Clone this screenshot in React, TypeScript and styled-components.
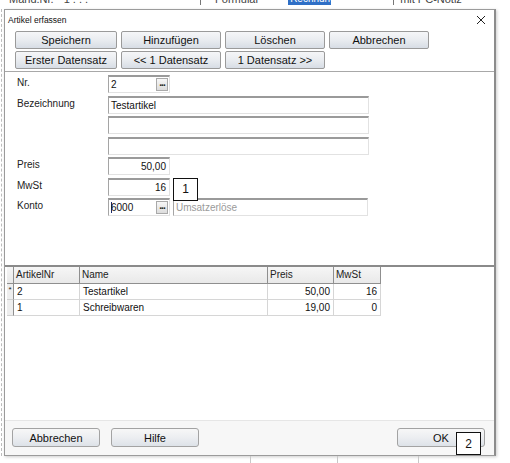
import styled, { createGlobalStyle } from "styled-components"

const GlobalStyle = createGlobalStyle`
  html, body {
    margin: 0;
    padding: 0;
    background: #ffffff;
    font-family: "Liberation Sans", Arial, sans-serif;
  }
  * { box-sizing: border-box; }
`

const Page = styled.div`
  width: 510px;
  height: 463px;
  overflow: hidden;
  position: relative;
  background: #ffffff;
`

const BackStrip = styled.div`
  height: 9px;
  display: flex;
  align-items: flex-end;
  overflow: hidden;
  padding-bottom: 4px;
  font-size: 11px;
  color: #444;
`

const BackText = styled.span<{ $x: number }>`
  margin-left: ${(p) => p.$x}px;
  line-height: 11px;
  white-space: nowrap;
`

const BackHighlight = styled.span<{ $x: number }>`
  margin-left: ${(p) => p.$x}px;
  width: 43px;
  height: 12px;
  background: #2f6fc6;
  color: #fff;
  line-height: 11px;
  font-size: 10px;
  padding-left: 2px;
`

const BackTick = styled.span<{ $x: number }>`
  margin-left: ${(p) => p.$x}px;
  width: 1px;
  height: 6px;
  background: #777;
`

const Body = styled.div`
  display: flex;
`

const Gutter = styled.div`
  width: 4px;
  border-left: 1px dashed #bdbdbd;
  margin-left: 1px;
`

const Dialog = styled.div`
  width: 492px;
  margin-left: -1px;
  height: 447px;
  display: flex;
  flex-direction: column;
  border: 1px solid #9b9b9b;
  border-right: 2px solid #8c8c8c;
  background: #ffffff;
  box-shadow: 1px 1px 3px rgba(0, 0, 0, 0.2);
`

const TitleBar = styled.div`
  height: 20px;
  display: flex;
  align-items: center;
  justify-content: space-between;
  padding: 0 8px 0 3px;
`

const Title = styled.span`
  font-size: 8.5px;
  color: #111;
`

const Toolbar = styled.div`
  display: grid;
  grid-template-columns: 102px 100px 100px 100px;
  grid-auto-rows: 18px;
  column-gap: 4px;
  row-gap: 2px;
  padding: 1px 0 2px 10px;
  border-bottom: 1px solid #a8a8a8;
`

const ToolButton = styled.button`
  margin: 0;
  padding: 0;
  height: 18px;
  border: 1px solid #9a9a9a;
  border-radius: 2px;
  background: linear-gradient(#f5f6f8 0%, #e9ecf0 50%, #d7dde5 100%);
  font-family: "Liberation Sans", Arial, sans-serif;
  font-size: 11px;
  color: #111;
  line-height: 16px;
`

const FormPanel = styled.div`
  height: 195px;
  padding: 3px 0 0 12px;
  border-bottom: 2px solid #8a8a8a;
`

const FormGrid = styled.div`
  display: grid;
  grid-template-columns: 91px auto;
  grid-auto-rows: 18px;
  row-gap: 2.5px;
  align-items: center;
`

const Label = styled.span`
  font-size: 10px;
  color: #222;
  margin-top: -3px;
`

const FieldCell = styled.div`
  display: flex;
  gap: 3px;
  position: relative;
  height: 18px;
`

const TextBox = styled.div<{ $w: number; $right?: boolean; $muted?: boolean }>`
  width: ${(p) => p.$w}px;
  height: 18px;
  display: flex;
  align-items: center;
  justify-content: ${(p) => (p.$right ? "flex-end" : "flex-start")};
  padding: 0 3px 0 2px;
  border-top: 2px solid #9a9a9a;
  border-left: 1px solid #a5a5a5;
  border-right: 1px solid #e2e2e2;
  border-bottom: 1px solid #e2e2e2;
  font-size: 10px;
  color: ${(p) => (p.$muted ? "#9a9a9a" : "#111")};
  background: #fff;
`

const DotsButton = styled.span`
  margin-left: auto;
  margin-right: -2px;
  width: 12px;
  height: 13px;
  border: 1px solid #a9a9a9;
  background: linear-gradient(#f7f7f7, #dcdcdc);
  font-size: 10px;
  font-weight: bold;
  line-height: 7px;
  letter-spacing: -1px;
  text-align: center;
  color: #222;
  overflow: hidden;
`

const Caret = styled.span`
  width: 1px;
  height: 11px;
  background: #1a2a6a;
  margin-right: -1px;
`

const Callout = styled.div`
  position: absolute;
  width: 25px;
  height: 23px;
  border: 1px solid #111;
  background: #fff;
  font-size: 12px;
  color: #111;
  display: flex;
  align-items: center;
  justify-content: center;
  z-index: 2;
`

const GridPanel = styled.div`
  flex: 1;
  padding: 0 0 0 2px;
  border-bottom: 1px solid #e6e6e6;
`

const Table = styled.div`
  display: grid;
  grid-template-columns: 7px 66px 188px 66px 47px;
  grid-template-rows: 17px 16px 16px;
  width: max-content;
`

const HeadCell = styled.div`
  background: linear-gradient(#f6f6f6, #e9e9e9);
  border-right: 1px solid #8f8f8f;
  border-bottom: 1px solid #8f8f8f;
  font-size: 10px;
  color: #222;
  padding-left: 2px;
  line-height: 16px;
`

const Selector = styled.div`
  background: #eeeeee;
  border-right: 1px solid #8f8f8f;
  border-bottom: 1px solid #d0d0d0;
  font-size: 8px;
  line-height: 12px;
  text-align: center;
  color: #222;
`

const Cell = styled.div<{ $right?: boolean }>`
  border-right: 1px solid #d6d6d6;
  border-bottom: 1px solid #d6d6d6;
  font-size: 10px;
  color: #111;
  line-height: 15px;
  padding: 0 3px 0 3px;
  text-align: ${(p) => (p.$right ? "right" : "left")};
`

const Footer = styled.div`
  height: 34px;
  position: relative;
  display: flex;
  align-items: flex-start;
  padding: 7px 9px 0 7px;
  gap: 11px;
  background: #f7f7f7;
`

const FooterButton = styled.button<{ $push?: boolean }>`
  margin: 0 0 0 ${(p) => (p.$push ? "auto" : "0")};
  padding: 0;
  width: 88px;
  height: 19px;
  border: 1px solid #a3a3a3;
  border-radius: 3px;
  background: linear-gradient(#f7f7f7 0%, #eceef1 50%, #dde2e8 100%);
  font-family: "Liberation Sans", Arial, sans-serif;
  font-size: 11px;
  color: #111;
`

const BottomStrip = styled.div`
  height: 8px;
  display: flex;
`

const BottomTick = styled.span<{ $x: number }>`
  margin-left: ${(p) => p.$x}px;
  width: 1px;
  height: 8px;
  background: #c8c8c8;
`

const CloseIcon = () => (
  <svg width="10" height="10" viewBox="0 0 10 10">
    <path d="M1 1 L9 9 M9 1 L1 9" stroke="#222" strokeWidth="1" fill="none" />
  </svg>
)

const rows = [
  { nr: "2", name: "Testartikel", preis: "50,00", mwst: "16", mark: "*" },
  { nr: "1", name: "Schreibwaren", preis: "19,00", mwst: "0", mark: "" },
]

export default function App() {
  return (
    <Page>
      <GlobalStyle />
      <BackStrip>
        <BackText $x={9}>Mand.Nr.</BackText>
        <BackText $x={10}>1 . . .</BackText>
        <BackTick $x={112} />
        <BackText $x={14}>Formular</BackText>
        <BackHighlight $x={29}>Rechnung</BackHighlight>
        <BackTick $x={62} />
        <BackText $x={6}>mit PC-Notiz</BackText>
      </BackStrip>
      <Body>
        <Gutter />
        <Dialog>
          <TitleBar>
            <Title>Artikel erfassen</Title>
            <CloseIcon />
          </TitleBar>
          <Toolbar>
            <ToolButton>Speichern</ToolButton>
            <ToolButton>Hinzufügen</ToolButton>
            <ToolButton>Löschen</ToolButton>
            <ToolButton>Abbrechen</ToolButton>
            <ToolButton>Erster Datensatz</ToolButton>
            <ToolButton>&lt;&lt; 1 Datensatz</ToolButton>
            <ToolButton>1 Datensatz &gt;&gt;</ToolButton>
          </Toolbar>
          <FormPanel>
            <FormGrid>
              <Label>Nr.</Label>
              <FieldCell>
                <TextBox $w={62}>
                  2<DotsButton>...</DotsButton>
                </TextBox>
              </FieldCell>
              <Label>Bezeichnung</Label>
              <FieldCell>
                <TextBox $w={261}>Testartikel</TextBox>
              </FieldCell>
              <span />
              <FieldCell>
                <TextBox $w={261} />
              </FieldCell>
              <span />
              <FieldCell>
                <TextBox $w={261} />
              </FieldCell>
              <Label>Preis</Label>
              <FieldCell>
                <TextBox $w={62} $right>
                  50,00
                </TextBox>
              </FieldCell>
              <Label>MwSt</Label>
              <FieldCell>
                <TextBox $w={62} $right>
                  16
                </TextBox>
                <Callout style={{ left: 65, top: 0 }}>1</Callout>
              </FieldCell>
              <Label>Konto</Label>
              <FieldCell>
                <TextBox $w={62}>
                  <Caret />
                  6000<DotsButton>...</DotsButton>
                </TextBox>
                <TextBox $w={195} $muted>
                  Umsatzerlöse
                </TextBox>
              </FieldCell>
            </FormGrid>
          </FormPanel>
          <GridPanel>
            <Table>
              <HeadCell />
              <HeadCell>ArtikelNr</HeadCell>
              <HeadCell>Name</HeadCell>
              <HeadCell>Preis</HeadCell>
              <HeadCell>MwSt</HeadCell>
              {rows.map((r) => (
                <>
                  <Selector key={r.nr + "s"}>{r.mark}</Selector>
                  <Cell key={r.nr + "n"}>{r.nr}</Cell>
                  <Cell key={r.nr + "m"}>{r.name}</Cell>
                  <Cell key={r.nr + "p"} $right>
                    {r.preis}
                  </Cell>
                  <Cell key={r.nr + "w"} $right>
                    {r.mwst}
                  </Cell>
                </>
              ))}
            </Table>
          </GridPanel>
          <Footer>
            <FooterButton>Abbrechen</FooterButton>
            <FooterButton>Hilfe</FooterButton>
            <FooterButton $push>OK</FooterButton>
            <Callout style={{ right: 13, top: 11 }}>2</Callout>
          </Footer>
        </Dialog>
      </Body>
      <BottomStrip>
        <BottomTick $x={250} />
        <BottomTick $x={86} />
        <BottomTick $x={80} />
      </BottomStrip>
    </Page>
  )
}
